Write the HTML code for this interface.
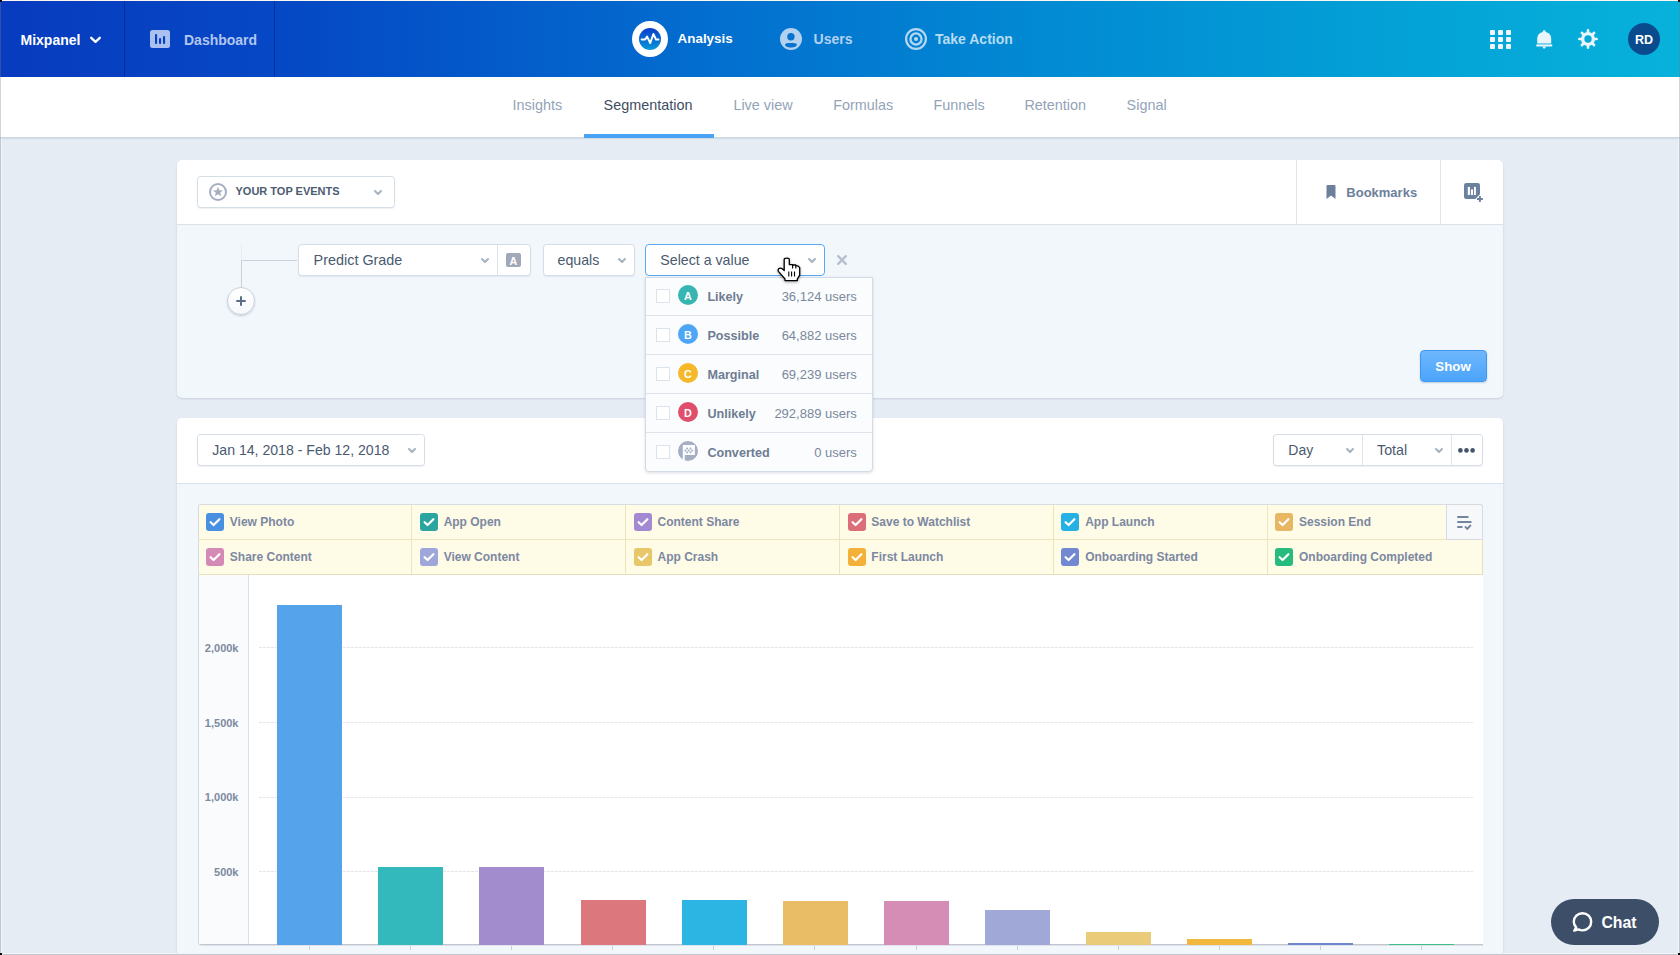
<!DOCTYPE html>
<html><head><meta charset="utf-8">
<style>
*{margin:0;padding:0;box-sizing:border-box}
html,body{width:1680px;height:955px;overflow:hidden}
body{position:relative;background:#e5ecf4;font-family:"Liberation Sans",sans-serif;color:#44546a}
.a{position:absolute}
.t{position:absolute;white-space:nowrap;line-height:1}
.b{font-weight:bold}
svg{position:absolute;overflow:visible}
/* header */
#hdr{left:0;top:0;width:1680px;height:77px;background:linear-gradient(90deg,#083bbf 0%,#0549c5 18%,#036ecf 42%,#028ad3 62%,#03a0d6 82%,#07b2db 100%)}
#topline{left:0;top:0;width:1680px;height:1px;background:#fdf6f0}
.hsep{top:1px;width:1px;height:76px;background:rgba(0,20,110,0.45)}
#sub{left:0;top:77px;width:1680px;height:61px;background:#fff;border-bottom:1px solid #d0dae3;box-shadow:0 1px 1px rgba(170,190,210,0.35)}
.tab{font-size:14.4px;color:#93a3b8;top:98.1px}
.panel{background:#fff;border-radius:5px;box-shadow:0 1px 2px rgba(60,80,110,0.18)}
.box{background:#fff;border:1px solid #d5dde7;border-radius:3.5px;box-shadow:0 1px 1px rgba(60,80,110,0.08)}
.lg{font-size:12px;font-weight:bold;color:#7c88a1}
.cb{width:18px;height:18px;border-radius:3px}
.ylab{font-size:11px;font-weight:bold;color:#7d8aa0;text-align:right}
.grid{height:1px;background:repeating-linear-gradient(90deg,#e2e5ea 0 3px,transparent 3px 4px)}
.bar{bottom:10px}
.dd-row{left:646px;width:226px;height:39px;border-top:1px solid #dfe5ec}
.chk{width:14px;height:14px;border:1px solid #dbe3ed;background:#fff}
.av{width:20px;height:20px;border-radius:50%;color:#fff;font-weight:bold;font-size:10.8px;text-align:center;line-height:23px}
.ddl{font-size:12.6px;font-weight:bold;color:#6e7c93}
.ddr{font-size:13px;color:#7a889c;text-align:right}
</style></head><body>

<!-- HEADER -->
<div id="hdr" class="a"></div>
<div id="topline" class="a"></div>
<div class="a hsep" style="left:124px"></div>
<div class="a hsep" style="left:274px"></div>
<div class="t b" style="left:20.5px;top:33.2px;font-size:14px;color:#fff">Mixpanel</div>
<svg style="left:90px;top:36px" width="11" height="8" viewBox="0 0 11 8"><path d="M1.2 1.8 L5.5 5.8 L9.8 1.8" fill="none" stroke="#fff" stroke-width="2.3" stroke-linecap="round" stroke-linejoin="round"/></svg>
<svg style="left:150px;top:30px" width="20" height="18" viewBox="0 0 20 18"><rect x="0" y="0" width="20" height="18" rx="2.5" fill="#a9c0f0"/><rect x="5" y="3.9" width="2.1" height="10.1" rx="1" fill="#0840c4"/><rect x="9" y="8" width="2.1" height="6" rx="1" fill="#0840c4"/><rect x="13" y="6" width="2.1" height="8" rx="1" fill="#0840c4"/></svg>
<div class="t b" style="left:184px;top:33.2px;font-size:14px;color:#b2c6f1">Dashboard</div>

<div class="a" style="left:632px;top:21px;width:36px;height:36px;border-radius:50%;background:#fff"></div>
<div class="a" style="left:639px;top:28px;width:22px;height:22px;border-radius:50%;background:linear-gradient(180deg,#0a3ccb,#0899d8)"></div>
<svg style="left:639px;top:28px" width="22" height="22" viewBox="0 0 22 22"><path d="M2.6 11.5 H6.1 L8.1 8.6 L11.2 15.1 L14.4 6 L17 11.5 H19.5" fill="none" stroke="#fff" stroke-width="1.9" stroke-linejoin="round" stroke-linecap="round"/></svg>
<div class="t b" style="left:677.6px;top:32.3px;font-size:13.4px;color:#fff">Analysis</div>

<svg style="left:780px;top:28px" width="22" height="22" viewBox="0 0 22 22"><circle cx="11" cy="11" r="11" fill="#b2d0ef"/><circle cx="10.9" cy="8.7" r="3.7" fill="#0672d0"/><path d="M5 16.6 C5 15.3 7.5 14.9 10.9 14.9 C14.3 14.9 16.9 15.3 16.9 16.6 C16.9 18.3 14.3 19.6 10.9 19.6 C7.5 19.6 5 18.3 5 16.6Z" fill="#0672d0"/></svg>
<div class="t b" style="left:813.6px;top:32.2px;font-size:14px;color:#b3d2f2">Users</div>

<svg style="left:905px;top:28px" width="22" height="22" viewBox="0 0 22 22"><circle cx="11" cy="11" r="9.9" fill="none" stroke="#b4d8f1" stroke-width="2.2"/><circle cx="11" cy="11" r="5.55" fill="none" stroke="#b4d8f1" stroke-width="2.3"/><circle cx="11" cy="11" r="2.1" fill="#b4d8f1"/></svg>
<div class="t b" style="left:935px;top:32.2px;font-size:14px;color:#b6dcf3">Take Action</div>

<!-- right icons -->
<svg style="left:1490px;top:30px" width="21" height="19" viewBox="0 0 21 19" fill="#eef6fb"><rect x="0" y="0" width="5" height="5" rx="1"/><rect x="8" y="0" width="5" height="5" rx="1"/><rect x="16" y="0" width="5" height="5" rx="1"/><rect x="0" y="7" width="5" height="5" rx="1"/><rect x="8" y="7" width="5" height="5" rx="1"/><rect x="16" y="7" width="5" height="5" rx="1"/><rect x="0" y="14" width="5" height="5" rx="1"/><rect x="8" y="14" width="5" height="5" rx="1"/><rect x="16" y="14" width="5" height="5" rx="1"/></svg>
<svg style="left:1535.5px;top:29.5px" width="17" height="19" viewBox="0 0 17 19" fill="#eaf5fb"><circle cx="8.2" cy="1.6" r="1.4"/><path d="M1.2 13.4 V8.6 C1.2 4.6 4.2 1.9 8.2 1.9 C12.2 1.9 15.2 4.6 15.2 8.6 V13.4Z"/><rect x="0.3" y="14.4" width="15.9" height="2.1"/><path d="M6.6 16.4 H9.8 C9.8 17.6 9.1 18.5 8.2 18.5 C7.3 18.5 6.6 17.6 6.6 16.4Z"/></svg>
<svg style="left:1578.2px;top:28.6px" width="20" height="20" viewBox="0 0 20 20"><g fill="#eaf5fb" transform="translate(10 10)"><circle r="7"/><rect x="-1.3" y="-9.9" width="2.6" height="4.5" rx="1.1" transform="rotate(0)"/><rect x="-1.3" y="-9.9" width="2.6" height="4.5" rx="1.1" transform="rotate(45)"/><rect x="-1.3" y="-9.9" width="2.6" height="4.5" rx="1.1" transform="rotate(90)"/><rect x="-1.3" y="-9.9" width="2.6" height="4.5" rx="1.1" transform="rotate(135)"/><rect x="-1.3" y="-9.9" width="2.6" height="4.5" rx="1.1" transform="rotate(180)"/><rect x="-1.3" y="-9.9" width="2.6" height="4.5" rx="1.1" transform="rotate(225)"/><rect x="-1.3" y="-9.9" width="2.6" height="4.5" rx="1.1" transform="rotate(270)"/><rect x="-1.3" y="-9.9" width="2.6" height="4.5" rx="1.1" transform="rotate(315)"/></g><circle cx="10" cy="10" r="3.7" fill="#07a9d9"/></svg>
<div class="a" style="left:1628px;top:23px;width:32px;height:32px;border-radius:50%;background:#0a4b8e"></div>
<div class="t b" style="left:1628px;top:33.5px;width:32px;text-align:center;font-size:12.5px;color:#fff">RD</div>

<!-- SUBNAV -->
<div id="sub" class="a"></div>
<div class="t tab" style="left:512.5px">Insights</div>
<div class="t tab" style="left:603.6px;color:#3e4d62">Segmentation</div>
<div class="t tab" style="left:733.4px">Live view</div>
<div class="t tab" style="left:833.2px">Formulas</div>
<div class="t tab" style="left:933.5px">Funnels</div>
<div class="t tab" style="left:1024.4px">Retention</div>
<div class="t tab" style="left:1126.6px">Signal</div>
<div class="a" style="left:584px;top:134px;width:130px;height:4px;background:#4aa3f5"></div>

<!-- PANEL 1 -->
<div class="a panel" style="left:177px;top:160px;width:1326px;height:238px;background:#f2f7fc"></div>
<div class="a" style="left:177px;top:160px;width:1326px;height:65px;background:#fff;border-radius:5px 5px 0 0;border-bottom:1px solid #d9e1ea"></div>
<div class="a" style="left:1296px;top:160px;width:1px;height:64px;background:#dde4ec"></div>
<div class="a" style="left:1440px;top:160px;width:1px;height:64px;background:#dde4ec"></div>

<div class="a box" style="left:197px;top:176px;width:198px;height:32px"></div>
<svg style="left:209px;top:183px" width="18" height="18" viewBox="0 0 18 18"><circle cx="9" cy="9" r="8" fill="none" stroke="#a5aec0" stroke-width="2"/><path d="M9 3.8 L10.4 7.3 L14 7.4 L11.2 9.7 L12.2 13.2 L9 11.2 L5.8 13.2 L6.8 9.7 L4 7.4 L7.6 7.3Z" fill="#a5aec0"/></svg>
<div class="t b" style="left:235.5px;top:185.7px;font-size:11px;color:#4b5b71">YOUR TOP EVENTS</div>
<svg style="left:374px;top:190px" width="8" height="5" viewBox="0 0 8 5"><path d="M1 1 L4 4 L7 1" fill="none" stroke="#a7b4c2" stroke-width="2.1" stroke-linecap="round" stroke-linejoin="round"/></svg>

<svg style="left:1326px;top:185px" width="10" height="14" viewBox="0 0 10 14"><path d="M0.5 1 Q0.5 0 1.5 0 H8.5 Q9.5 0 9.5 1 V14 L5 10.5 L0.5 14Z" fill="#6c809b"/></svg>
<div class="t b" style="left:1346.3px;top:186.2px;font-size:13px;color:#6c809b">Bookmarks</div>
<svg style="left:1464px;top:183px" width="22" height="22" viewBox="0 0 22 22"><rect x="0" y="0" width="16" height="16" rx="2.2" fill="#6b819c"/><rect x="3.8" y="3.9" width="2.1" height="8.1" fill="#fff"/><rect x="6.9" y="6.4" width="2.1" height="5.6" fill="#fff"/><rect x="10" y="3.9" width="1.9" height="8.1" fill="#fff"/><path d="M10.8 16.5 L16.5 10.8 V22 H10.8Z" fill="#fff"/><rect x="14.9" y="13.1" width="2" height="5.8" fill="#6b819c"/><rect x="13" y="15" width="5.8" height="2" fill="#6b819c"/></svg>

<!-- filter row -->
<div class="a" style="left:241px;top:244px;width:1px;height:17px;background:#e8edf2"></div>
<div class="a" style="left:241px;top:260px;width:1px;height:27px;background:#c8d2dd"></div>
<div class="a" style="left:241px;top:260px;width:56px;height:1px;background:#c8d2dd"></div>
<div class="a" style="left:227px;top:287px;width:28px;height:28px;border-radius:50%;background:linear-gradient(180deg,#fff,#f6f8fb);border:1px solid #c9d2dd;box-shadow:0 1px 2px rgba(60,80,110,0.25)"></div>
<svg style="left:236.2px;top:296px" width="10" height="10" viewBox="0 0 10 10"><path d="M5 0.3 V9.7 M0.3 5 H9.7" stroke="#5a6d88" stroke-width="2"/></svg>

<div class="a box" style="left:298px;top:244px;width:233px;height:32px"></div>
<div class="a" style="left:497px;top:245px;width:1px;height:30px;background:#dde4ec"></div>
<div class="t" style="left:313.6px;top:252.9px;font-size:14.4px;color:#4a5a70">Predict Grade</div>
<svg style="left:481px;top:258px" width="8" height="5" viewBox="0 0 8 5"><path d="M1 1 L4 4 L7 1" fill="none" stroke="#a7b4c2" stroke-width="2.1" stroke-linecap="round" stroke-linejoin="round"/></svg>
<div class="a" style="left:506px;top:253px;width:15px;height:14px;border-radius:2px;background:#a1a8b9;color:#fff;font-weight:bold;font-size:10.8px;line-height:16px;text-align:center">A</div>

<div class="a box" style="left:542.5px;top:244px;width:92px;height:32px"></div>
<div class="t" style="left:557.5px;top:252.9px;font-size:14.2px;color:#4a5a70">equals</div>
<svg style="left:618px;top:258px" width="8" height="5" viewBox="0 0 8 5"><path d="M1 1 L4 4 L7 1" fill="none" stroke="#a7b4c2" stroke-width="2.1" stroke-linecap="round" stroke-linejoin="round"/></svg>

<div class="a" style="left:645px;top:244px;width:180px;height:32px;background:#fff;border:1.5px solid #5aa8f2;border-radius:4px"></div>
<div class="t" style="left:660.3px;top:252.6px;font-size:14.2px;color:#4a5a70">Select a value</div>
<svg style="left:808px;top:258px" width="8" height="5" viewBox="0 0 8 5"><path d="M1 1 L4 4 L7 1" fill="none" stroke="#a7b4c2" stroke-width="2.1" stroke-linecap="round" stroke-linejoin="round"/></svg>
<svg style="left:837px;top:255px" width="10" height="10" viewBox="0 0 10 10"><path d="M1.2 1.2 L8.8 8.8 M8.8 1.2 L1.2 8.8" stroke="#b6c1cd" stroke-width="2.4" stroke-linecap="round"/></svg>

<div class="a" style="left:1420px;top:350px;width:67px;height:32px;border-radius:4px;background:linear-gradient(180deg,#6eb7fc,#4ba4fb);border:1px solid #3f98ef;box-shadow:0 1px 2px rgba(40,80,140,0.25)"></div>
<div class="t b" style="left:1419.5px;top:360px;width:67px;text-align:center;font-size:13.3px;color:#fff">Show</div>

<!-- PANEL 2 -->
<div class="a panel" style="left:177px;top:418px;width:1326px;height:560px;background:#f2f7fc"></div>
<div class="a" style="left:177px;top:418px;width:1326px;height:66px;background:#fff;border-radius:5px 5px 0 0;border-bottom:1px solid #d9e1ea"></div>

<div class="a box" style="left:197px;top:434px;width:228px;height:32px"></div>
<div class="t" style="left:212.3px;top:443.3px;font-size:14.1px;color:#4a5a70">Jan 14, 2018 - Feb 12, 2018</div>
<svg style="left:408px;top:448px" width="8" height="5" viewBox="0 0 8 5"><path d="M1 1 L4 4 L7 1" fill="none" stroke="#a7b4c2" stroke-width="2.1" stroke-linecap="round" stroke-linejoin="round"/></svg>

<div class="a box" style="left:1273px;top:434px;width:210px;height:32px"></div>
<div class="a" style="left:1362px;top:435px;width:1px;height:30px;background:#dde4ec"></div>
<div class="a" style="left:1451px;top:435px;width:1px;height:30px;background:#dde4ec"></div>
<div class="t" style="left:1288.3px;top:442.9px;font-size:14px;color:#4a5a70">Day</div>
<svg style="left:1346px;top:448px" width="8" height="5" viewBox="0 0 8 5"><path d="M1 1 L4 4 L7 1" fill="none" stroke="#a7b4c2" stroke-width="2.1" stroke-linecap="round" stroke-linejoin="round"/></svg>
<div class="t" style="left:1377px;top:442.9px;font-size:14.3px;color:#4a5a70">Total</div>
<svg style="left:1435px;top:448px" width="8" height="5" viewBox="0 0 8 5"><path d="M1 1 L4 4 L7 1" fill="none" stroke="#a7b4c2" stroke-width="2.1" stroke-linecap="round" stroke-linejoin="round"/></svg>
<svg style="left:1458px;top:447.5px" width="17" height="5" viewBox="0 0 17 5" fill="#44546a"><circle cx="2.4" cy="2.4" r="2.3"/><circle cx="8.5" cy="2.4" r="2.3"/><circle cx="14.6" cy="2.4" r="2.3"/></svg>

<!-- legend -->
<div class="a" style="left:197.5px;top:504px;width:1285px;height:71px;background:#fefbe7;border:1px solid #e6dfba;border-top-color:#d9dde3;border-left-color:#d6dbe2;border-radius:3px 3px 0 0"></div>
<div class="a" style="left:197.5px;top:539px;width:1285px;height:1px;background:#ece4bf"></div>
<div class="a" style="left:411px;top:505px;width:1px;height:69px;background:#ece4bf"></div>
<div class="a" style="left:625px;top:505px;width:1px;height:69px;background:#ece4bf"></div>
<div class="a" style="left:839px;top:505px;width:1px;height:69px;background:#ece4bf"></div>
<div class="a" style="left:1053px;top:505px;width:1px;height:69px;background:#ece4bf"></div>
<div class="a" style="left:1267px;top:505px;width:1px;height:69px;background:#ece4bf"></div>
<div class="a" style="left:1446px;top:504px;width:37px;height:36px;background:#f6f8fa;border:1px solid #d6dbe2;border-radius:0 3px 0 0"></div>
<svg style="left:1456px;top:516px" width="17" height="15" viewBox="0 0 17 15"><path d="M2 1 H11.7 M2 5.9 H14.7 M2 11 H5.7" stroke="#74849d" stroke-width="2" stroke-linecap="round"/><path d="M9.6 11.1 L11.3 12.9 L14.3 9.6" fill="none" stroke="#74849d" stroke-width="2" stroke-linecap="round" stroke-linejoin="round"/></svg>

<!--LEG-->
<div class="a cb" style="left:206.1px;top:513px;background:#4a90e2"></div>
<svg style="left:206.1px;top:513px" width="18" height="18" viewBox="0 0 18 18"><path d="M4.6 9.2 L7.6 12 L13.4 6.2" fill="none" stroke="#fff" stroke-width="2.2" stroke-linecap="round" stroke-linejoin="round"/></svg>
<div class="t lg" style="left:229.8px;top:515.5px">View Photo</div>
<div class="a cb" style="left:419.94px;top:513px;background:#2ba5a0"></div>
<svg style="left:419.94px;top:513px" width="18" height="18" viewBox="0 0 18 18"><path d="M4.6 9.2 L7.6 12 L13.4 6.2" fill="none" stroke="#fff" stroke-width="2.2" stroke-linecap="round" stroke-linejoin="round"/></svg>
<div class="t lg" style="left:443.64px;top:515.5px">App Open</div>
<div class="a cb" style="left:633.78px;top:513px;background:#a289d1"></div>
<svg style="left:633.78px;top:513px" width="18" height="18" viewBox="0 0 18 18"><path d="M4.6 9.2 L7.6 12 L13.4 6.2" fill="none" stroke="#fff" stroke-width="2.2" stroke-linecap="round" stroke-linejoin="round"/></svg>
<div class="t lg" style="left:657.48px;top:515.5px">Content Share</div>
<div class="a cb" style="left:847.62px;top:513px;background:#db6e79"></div>
<svg style="left:847.62px;top:513px" width="18" height="18" viewBox="0 0 18 18"><path d="M4.6 9.2 L7.6 12 L13.4 6.2" fill="none" stroke="#fff" stroke-width="2.2" stroke-linecap="round" stroke-linejoin="round"/></svg>
<div class="t lg" style="left:871.32px;top:515.5px">Save to Watchlist</div>
<div class="a cb" style="left:1061.46px;top:513px;background:#26b0e4"></div>
<svg style="left:1061.46px;top:513px" width="18" height="18" viewBox="0 0 18 18"><path d="M4.6 9.2 L7.6 12 L13.4 6.2" fill="none" stroke="#fff" stroke-width="2.2" stroke-linecap="round" stroke-linejoin="round"/></svg>
<div class="t lg" style="left:1085.16px;top:515.5px">App Launch</div>
<div class="a cb" style="left:1275.3px;top:513px;background:#e8b764"></div>
<svg style="left:1275.3px;top:513px" width="18" height="18" viewBox="0 0 18 18"><path d="M4.6 9.2 L7.6 12 L13.4 6.2" fill="none" stroke="#fff" stroke-width="2.2" stroke-linecap="round" stroke-linejoin="round"/></svg>
<div class="t lg" style="left:1299.0px;top:515.5px">Session End</div>
<div class="a cb" style="left:206.1px;top:548px;background:#d58ab6"></div>
<svg style="left:206.1px;top:548px" width="18" height="18" viewBox="0 0 18 18"><path d="M4.6 9.2 L7.6 12 L13.4 6.2" fill="none" stroke="#fff" stroke-width="2.2" stroke-linecap="round" stroke-linejoin="round"/></svg>
<div class="t lg" style="left:229.8px;top:550.5px">Share Content</div>
<div class="a cb" style="left:419.94px;top:548px;background:#9ea6da"></div>
<svg style="left:419.94px;top:548px" width="18" height="18" viewBox="0 0 18 18"><path d="M4.6 9.2 L7.6 12 L13.4 6.2" fill="none" stroke="#fff" stroke-width="2.2" stroke-linecap="round" stroke-linejoin="round"/></svg>
<div class="t lg" style="left:443.64px;top:550.5px">View Content</div>
<div class="a cb" style="left:633.78px;top:548px;background:#e8c66a"></div>
<svg style="left:633.78px;top:548px" width="18" height="18" viewBox="0 0 18 18"><path d="M4.6 9.2 L7.6 12 L13.4 6.2" fill="none" stroke="#fff" stroke-width="2.2" stroke-linecap="round" stroke-linejoin="round"/></svg>
<div class="t lg" style="left:657.48px;top:550.5px">App Crash</div>
<div class="a cb" style="left:847.62px;top:548px;background:#f3b13a"></div>
<svg style="left:847.62px;top:548px" width="18" height="18" viewBox="0 0 18 18"><path d="M4.6 9.2 L7.6 12 L13.4 6.2" fill="none" stroke="#fff" stroke-width="2.2" stroke-linecap="round" stroke-linejoin="round"/></svg>
<div class="t lg" style="left:871.32px;top:550.5px">First Launch</div>
<div class="a cb" style="left:1061.46px;top:548px;background:#7288d0"></div>
<svg style="left:1061.46px;top:548px" width="18" height="18" viewBox="0 0 18 18"><path d="M4.6 9.2 L7.6 12 L13.4 6.2" fill="none" stroke="#fff" stroke-width="2.2" stroke-linecap="round" stroke-linejoin="round"/></svg>
<div class="t lg" style="left:1085.16px;top:550.5px">Onboarding Started</div>
<div class="a cb" style="left:1275.3px;top:548px;background:#28bb7e"></div>
<svg style="left:1275.3px;top:548px" width="18" height="18" viewBox="0 0 18 18"><path d="M4.6 9.2 L7.6 12 L13.4 6.2" fill="none" stroke="#fff" stroke-width="2.2" stroke-linecap="round" stroke-linejoin="round"/></svg>
<div class="t lg" style="left:1299.0px;top:550.5px">Onboarding Completed</div>
<!--/LEG-->

<!-- chart -->
<div class="a" style="left:197.5px;top:575px;width:1285px;height:370px;background:#fff;border-left:1px solid #d3d9e1;border-bottom:1px solid #c0c5cf;border-radius:0 0 0 4px;box-shadow:0 1px 0 #dfe3e9"></div>
<div class="a" style="left:198.5px;top:575px;width:50px;height:369px;background:#f9fbfd;border-right:1px solid #dbe1e8"></div>
<div class="a grid" style="left:259px;top:647px;width:1214px"></div>
<div class="a grid" style="left:259px;top:722px;width:1214px"></div>
<div class="a grid" style="left:259px;top:797px;width:1214px"></div>
<div class="a grid" style="left:259px;top:871px;width:1214px"></div>
<div class="t ylab" style="left:190px;width:48.5px;top:642.9px">2,000k</div>
<div class="t ylab" style="left:190px;width:48.5px;top:717.6px">1,500k</div>
<div class="t ylab" style="left:190px;width:48.5px;top:792.3px">1,000k</div>
<div class="t ylab" style="left:190px;width:48.5px;top:867px">500k</div>

<!--BARS-->
<div class="a" style="left:277.2px;top:605px;width:65px;height:340px;background:#55a3ea"></div>
<div class="a" style="left:309px;top:946px;width:1px;height:4px;background:#c9cfd8"></div>
<div class="a" style="left:378.31px;top:867px;width:65px;height:78px;background:#33b9bc"></div>
<div class="a" style="left:410px;top:946px;width:1px;height:4px;background:#c9cfd8"></div>
<div class="a" style="left:479.42px;top:867px;width:65px;height:78px;background:#a28ccd"></div>
<div class="a" style="left:511px;top:946px;width:1px;height:4px;background:#c9cfd8"></div>
<div class="a" style="left:580.53px;top:900px;width:65px;height:45px;background:#db777d"></div>
<div class="a" style="left:612px;top:946px;width:1px;height:4px;background:#c9cfd8"></div>
<div class="a" style="left:681.64px;top:900px;width:65px;height:45px;background:#2cb4e2"></div>
<div class="a" style="left:713px;top:946px;width:1px;height:4px;background:#c9cfd8"></div>
<div class="a" style="left:782.75px;top:901px;width:65px;height:44px;background:#e8bd66"></div>
<div class="a" style="left:814px;top:946px;width:1px;height:4px;background:#c9cfd8"></div>
<div class="a" style="left:883.86px;top:901px;width:65px;height:44px;background:#d58db5"></div>
<div class="a" style="left:916px;top:946px;width:1px;height:4px;background:#c9cfd8"></div>
<div class="a" style="left:984.97px;top:910px;width:65px;height:35px;background:#9fa8d6"></div>
<div class="a" style="left:1017px;top:946px;width:1px;height:4px;background:#c9cfd8"></div>
<div class="a" style="left:1086.08px;top:932px;width:65px;height:13px;background:#e9cb79"></div>
<div class="a" style="left:1118px;top:946px;width:1px;height:4px;background:#c9cfd8"></div>
<div class="a" style="left:1187.19px;top:939px;width:65px;height:6px;background:#f2b83d"></div>
<div class="a" style="left:1219px;top:946px;width:1px;height:4px;background:#c9cfd8"></div>
<div class="a" style="left:1288.3px;top:943px;width:65px;height:2px;background:#6e86cc"></div>
<div class="a" style="left:1320px;top:946px;width:1px;height:4px;background:#c9cfd8"></div>
<div class="a" style="left:1389.41px;top:943.6px;width:65px;height:1.4px;background:#3dbd8a"></div>
<div class="a" style="left:1421px;top:946px;width:1px;height:4px;background:#c9cfd8"></div>
<!--/BARS-->

<!-- dropdown -->
<div class="a" style="left:645px;top:276.5px;width:228px;height:195px;background:#fbfcfd;border:1px solid #d3dbe4;border-radius:0 0 4px 4px;box-shadow:0 1px 3px rgba(60,80,110,0.18)"></div>
<!--DD-->
<div class="a chk" style="left:656px;top:289.3px"></div>
<div class="a av" style="left:678px;top:285.0px;background:#37b5b3">A</div>
<div class="t ddl" style="left:707.4px;top:291.33px">Likely</div>
<div class="t ddr" style="left:756.8px;width:100px;top:289.99px">36,124 users</div>
<div class="a" style="left:646px;top:315.0px;width:226px;height:1px;background:#dce3eb"></div>
<div class="a chk" style="left:656px;top:328.3px"></div>
<div class="a av" style="left:678px;top:324.0px;background:#4ca5f5">B</div>
<div class="t ddl" style="left:707.4px;top:330.33px">Possible</div>
<div class="t ddr" style="left:756.8px;width:100px;top:328.99px">64,882 users</div>
<div class="a" style="left:646px;top:354.0px;width:226px;height:1px;background:#dce3eb"></div>
<div class="a chk" style="left:656px;top:367.3px"></div>
<div class="a av" style="left:678px;top:363.0px;background:#f5b829">C</div>
<div class="t ddl" style="left:707.4px;top:369.33px">Marginal</div>
<div class="t ddr" style="left:756.8px;width:100px;top:367.99px">69,239 users</div>
<div class="a" style="left:646px;top:393.0px;width:226px;height:1px;background:#dce3eb"></div>
<div class="a chk" style="left:656px;top:406.3px"></div>
<div class="a av" style="left:678px;top:402.0px;background:#e04e6c">D</div>
<div class="t ddl" style="left:707.4px;top:408.33px">Unlikely</div>
<div class="t ddr" style="left:756.8px;width:100px;top:406.99px">292,889 users</div>
<div class="a" style="left:646px;top:432.0px;width:226px;height:1px;background:#dce3eb"></div>
<div class="a chk" style="left:656px;top:445.3px"></div>
<svg style="left:678px;top:441.0px" width="20" height="20" viewBox="0 0 20 20"><circle cx="10" cy="10" r="10" fill="#a6aec4"/><path d="M4.8 4.6 Q4.8 4.1 5.3 4.1 H16.9 V14 H6.8 V20.5 H4.8Z" fill="#fbfcfd"/><g fill="#a6aec4"><circle cx="9.04" cy="7.57" r="1"/><circle cx="12.5" cy="7.57" r="1"/><circle cx="7.3" cy="9.45" r="1"/><circle cx="10.77" cy="9.45" r="1"/><circle cx="14.2" cy="9.45" r="1"/><circle cx="9.04" cy="11.3" r="1"/><circle cx="12.5" cy="11.3" r="1"/></g></svg>
<div class="t ddl" style="left:707.4px;top:447.33px">Converted</div>
<div class="t ddr" style="left:756.8px;width:100px;top:445.99px">0 users</div>
<!--/DD-->

<!-- cursor -->
<svg style="left:776px;top:256px;filter:drop-shadow(0 1px 1.5px rgba(0,0,0,0.35))" width="26" height="27" viewBox="0 0 26 27"><path d="M8.2 3.6 Q8.2 2.2 10.75 2.2 Q13.3 2.2 13.3 3.6 V8.6 H16.6 V9 H19.8 V9.6 Q22.5 9.6 23.7 11.5 V19.2 L21.3 23.2 V24.6 H9 V23 L2.6 15.6 Q1.6 14.2 2.6 12.8 Q4.3 11.3 6.2 12.8 L8.2 14.6 Z" fill="#fff" stroke="#000" stroke-width="1.3" stroke-linejoin="round"/><path d="M16.6 9 V12.5 M19.8 9.6 V12.5 M12.8 15.5 V20.5 M15.6 15.5 V20.5 M18.5 15.5 V20.5" stroke="#000" stroke-width="1.1"/></svg>

<!-- chat -->
<div class="a" style="left:1551px;top:899px;width:108px;height:46px;border-radius:23px;background:#3d4e69"></div>
<svg style="left:1572px;top:911px" width="22" height="22" viewBox="0 0 22 22"><path d="M2.3 19.6 L4.2 16.5 C2.6 15 1.8 13 1.8 10.8 C1.8 6 5.7 2.2 10.5 2.2 C15.3 2.2 19.2 6 19.2 10.8 C19.2 15.6 15.3 19.4 10.5 19.4 C9 19.4 7.7 19 6.6 18.4Z" fill="none" stroke="#fff" stroke-width="2.4" stroke-linejoin="round"/></svg>
<div class="t b" style="left:1601.4px;top:915.3px;font-size:15.8px;color:#fff">Chat</div>

<div class="a" style="left:1px;top:953px;width:1678px;height:1px;background:#eef4fb"></div>
<div class="a" style="left:1px;top:138px;width:1px;height:816px;background:#eef4fb"></div>
<div class="a" style="left:1678px;top:138px;width:1px;height:816px;background:#eef4fb"></div>
<div class="a" style="left:0;top:954px;width:1680px;height:1px;background:#c3c9cf"></div>
<div class="a" style="left:0;top:0;width:1px;height:955px;background:rgba(120,125,130,0.32)"></div>
<div class="a" style="left:1679px;top:0;width:1px;height:955px;background:rgba(120,125,130,0.32)"></div>
<div class="a" style="left:0;top:0;width:2px;height:2px;background:#000"></div>
<div class="a" style="left:1678px;top:0;width:2px;height:2px;background:#000"></div>
<div class="a" style="left:0;top:953px;width:2px;height:2px;background:#000"></div>
<div class="a" style="left:1678px;top:953px;width:2px;height:2px;background:#000"></div>
</body></html>
